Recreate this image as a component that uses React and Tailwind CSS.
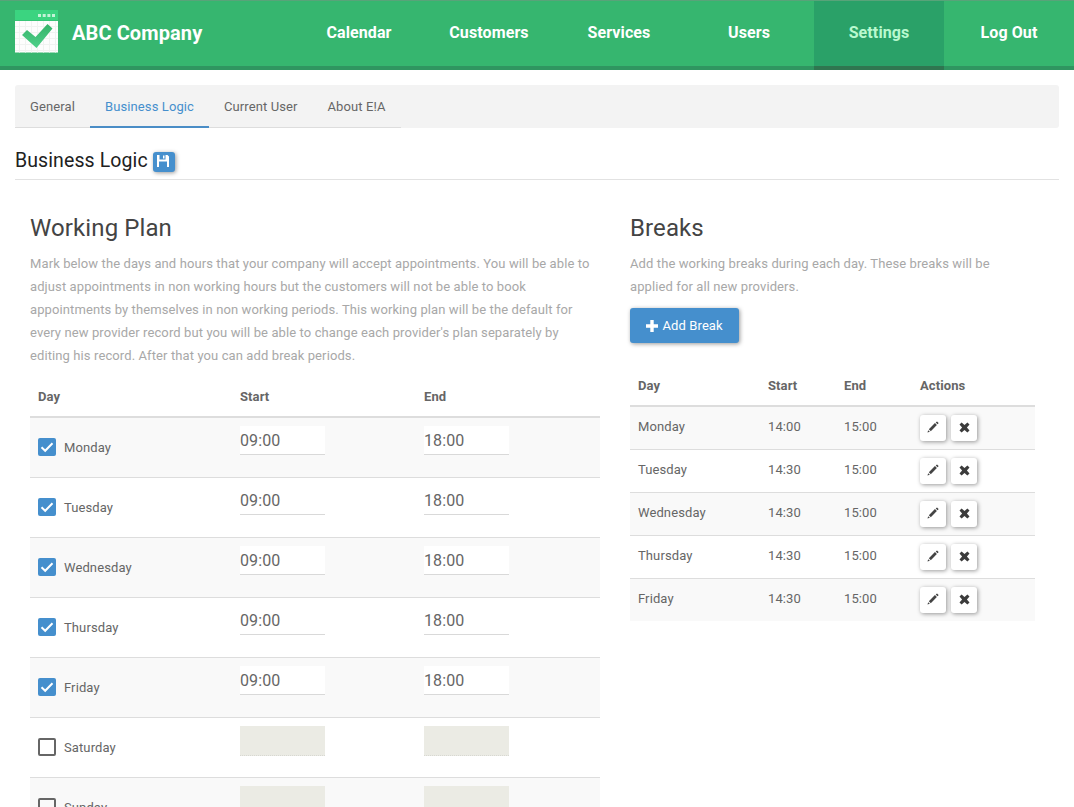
import React from "react";

const navItems = ["Calendar", "Customers", "Services", "Users", "Settings", "Log Out"];

const workingPlan = [
  { day: "Monday", start: "09:00", end: "18:00" },
  { day: "Tuesday", start: "09:00", end: "18:00" },
  { day: "Wednesday", start: "09:00", end: "18:00" },
  { day: "Thursday", start: "09:00", end: "18:00" },
  { day: "Friday", start: "09:00", end: "18:00" },
  { day: "Saturday" },
  { day: "Sunday" },
];

const breaks = [
  { day: "Monday", start: "14:00", end: "15:00" },
  { day: "Tuesday", start: "14:30", end: "15:00" },
  { day: "Wednesday", start: "14:30", end: "15:00" },
  { day: "Thursday", start: "14:30", end: "15:00" },
  { day: "Friday", start: "14:30", end: "15:00" },
];

function Logo() {
  return (
    <svg width="43" height="43" viewBox="0 0 43 43" className="block shrink-0">
      <defs>
        <linearGradient id="tick" x1="0" y1="0" x2="0" y2="1">
          <stop offset="0" stopColor="#35b369" />
          <stop offset="1" stopColor="#4fd08a" />
        </linearGradient>
      </defs>
      <rect width="43" height="10.5" fill="#3bd480" />
      {[23, 27.7, 32.4, 37].map((x) => (
        <rect key={x} x={x} y="4" width="3" height="3" fill="#c4f3d8" />
      ))}
      <rect y="11" width="43" height="31.5" fill="#fdfdfd" />
      <path
        d="M4.500 11v31.500M10.500 11v31.500M16.500 11v31.500M22.500 11v31.500M28.500 11v31.500M34.500 11v31.500M40.500 11v31.500M0 16.500h43M0 22.500h43M0 28.500h43M0 34.500h43M0 40.500h43"
        stroke="#f0f3f1"
        strokeWidth="1"
      />
      <path d="M7 25 12 20 20.500 27 32.500 14 37.500 18.500 21.500 38Z" fill="url(#tick)" />
    </svg>
  );
}

function SaveIcon() {
  return (
    <svg width="12" height="12" viewBox="0 0 12 12" className="block">
      <path d="M0 0H2.500V4.500H8.500V0H10.500L12 1.500V12H10V6.500H2V12H0ZM6 0.500H7.500V3.500H6Z" fill="#fff" />
    </svg>
  );
}

function PlusIcon() {
  return (
    <svg width="12" height="12" viewBox="0 0 12 12" className="block">
      <path d="M4.300 0H7.700V4.300H12V7.700H7.700V12H4.300V7.700H0V4.300H4.300Z" fill="#fff" />
    </svg>
  );
}

function PencilIcon() {
  return (
    <svg width="12" height="12" viewBox="0 0 13 13" className="block">
      <path d="M0.500 12.500 1.300 9.900 3.100 11.700Z" fill="#444" />
      <path d="M2 8.900 8.600 2.300 10.700 4.400 4.100 11Z" fill="#444" />
      <path d="M9.500 1.600 10.400 0.700Q10.800 0.400 11.200 0.700L12.300 1.800Q12.600 2.200 12.300 2.600L11.400 3.500Z" fill="#444" />
    </svg>
  );
}

function RemoveIcon() {
  return (
    <svg width="11" height="11" viewBox="0 0 11 11" className="block">
      <path
        d="M2.600 0.500 5.500 3.100 8.400 0.500 10.500 2.600 7.900 5.500 10.500 8.400 8.400 10.500 5.500 7.900 2.600 10.500 0.500 8.400 3.100 5.500 0.500 2.600Z"
        fill="#3c3c3c"
      />
    </svg>
  );
}

function Checkbox({ checked }) {
  if (!checked) return <span className="block size-[18px] rounded-[2px] border-2 border-[#666]" />;
  return (
    <span className="flex size-[18px] items-center justify-center rounded-[2px] bg-[#458fcd]">
      <svg width="14" height="12" viewBox="0 0 14 12">
        <path d="M1.500 6.300 5.200 9.800 12.500 2.200" fill="none" stroke="#fff" strokeWidth="2" />
      </svg>
    </span>
  );
}

function TimeField({ value }) {
  if (!value) {
    return <div className="h-[30px] w-[85px] border-b border-dotted border-[#d8d8d2] bg-[#ebebe4]" />;
  }
  return (
    <div className="h-[29px] w-[85px] border-b border-[#d9d9d9] bg-white text-base leading-[30px] text-[#666]">
      {value}
    </div>
  );
}

function IconButton({ children }) {
  return (
    <button className="flex h-[26px] w-[26px] items-center justify-center rounded-[3px] bg-white pb-[2px] shadow-[1px_1px_4px_rgba(0,0,0,0.4)]">
      {children}
    </button>
  );
}

export default function App() {
  return (
    <div className="h-[807px] w-full overflow-hidden bg-white font-['Roboto',sans-serif] text-[13px] leading-[23px] tracking-[0.104px] text-[#666]">
      <header className="flex h-[70px] justify-between border-t border-[#58a379] bg-[#36b66f]">
        <div className="flex grow gap-[14px] border-b-4 border-[#2f9560] pt-[9px] pl-[15px]">
          <Logo />
          <div className="pt-[9px] text-xl leading-[28px] font-bold text-white">ABC Company</div>
        </div>
        <nav className="flex">
          {navItems.map((item) => (
            <a
              key={item}
              className={
                item === "Settings"
                  ? "w-[130px] border-b-4 border-[#2f7650] bg-[#2aa168] pt-5 text-center text-base font-bold text-[#b9f9cf]"
                  : "w-[130px] border-b-4 border-[#2f9560] pt-5 text-center text-base font-bold text-white"
              }
            >
              {item}
            </a>
          ))}
        </nav>
      </header>

      <main className="px-[15px] pt-[15px]">
        <div className="flex h-[43px] rounded-[3px] bg-[#f3f3f3]">
          <a className="w-[75px] border-b border-[#ddd] pt-[10px] pl-[15px]">General</a>
          <a className="w-[119px] border-b-2 border-[#4a8dc6] pt-[10px] text-center text-[#458fcd]">Business Logic</a>
          <a className="w-[103px] border-b border-[#ddd] pt-[10px] pl-[15px]">Current User</a>
          <a className="w-[89px] border-b border-[#ddd] pt-[10px] pl-[15.500px]">About E!A</a>
        </div>

        <div className="flex h-[52px] gap-[6px] border-b border-[#e2e2e2] pt-[18px]">
          <h1 className="w-[132px] pt-px text-[19.5px] leading-[28px] whitespace-nowrap text-[#212121]">Business Logic</h1>
          <button className="mt-[6px] flex h-5 w-[22px] justify-center rounded-[3px] bg-[#458fcd] pt-[3px] pr-[2px] shadow-[1px_1px_4px_rgba(0,0,0,0.4)]">
            <SaveIcon />
          </button>
        </div>

        <div className="flex">
          <section className="w-[600px] px-[15px] pt-[34px]">
            <h2 className="text-2xl leading-[28px] text-[#444]">Working Plan</h2>
            <p className="mt-[10px] whitespace-nowrap text-[#a8a8a8]">
              Mark below the days and hours that your company will accept appointments. You will be able to
              <br />
              adjust appointments in non working hours but the customers will not be able to book
              <br />
              appointments by themselves in non working periods. This working plan will be the default for
              <br />
              every new provider record but you will be able to change each provider's plan separately by
              <br />
              editing his record. After that you can add break periods.
            </p>
            <div className="mt-[10px] grid h-[41px] grid-cols-[202px_184px_1fr] border-b-2 border-[#ddd] pt-2 pl-2 font-bold">
              <span>Day</span>
              <span>Start</span>
              <span>End</span>
            </div>
            <div>
              {workingPlan.map(({ day, start, end }) => (
                <div
                  key={day}
                  className="grid h-[60px] grid-cols-[202px_184px_1fr] border-b border-[#ddd] pt-2 pl-2 odd:bg-[#f9f9f9]"
                >
                  <div className="flex h-[42px] items-center gap-2">
                    <Checkbox checked={Boolean(start)} />
                    <span>{day}</span>
                  </div>
                  <TimeField value={start} />
                  <TimeField value={end} />
                </div>
              ))}
            </div>
          </section>

          <section className="w-[435px] px-[15px] pt-[34px]">
            <h2 className="text-2xl leading-[28px] text-[#444]">Breaks</h2>
            <p className="mt-[10px] whitespace-nowrap text-[#a8a8a8]">
              Add the working breaks during each day. These breaks will be
              <br />
              applied for all new providers.
            </p>
            <button className="mt-[10px] flex h-[35px] w-[109px] items-center gap-[4.500px] rounded-[3px] bg-[#458fcd] pl-4 text-white shadow-[1px_1px_4px_rgba(0,0,0,0.4)]">
              <PlusIcon />
              Add Break
            </button>
            <div className="mt-[23px] grid h-[41px] grid-cols-[130px_76px_76px_1fr] border-b-2 border-[#ddd] pt-2 pl-2 font-bold">
              <span>Day</span>
              <span>Start</span>
              <span>End</span>
              <span>Actions</span>
            </div>
            <div>
              {breaks.map(({ day, start, end }) => (
                <div
                  key={day}
                  className="grid h-[43px] grid-cols-[130px_76px_76px_1fr] border-b border-[#ddd] pt-2 pl-2 last:h-[42px] last:border-b-0 odd:bg-[#f9f9f9]"
                >
                  <span>{day}</span>
                  <span>{start}</span>
                  <span>{end}</span>
                  <div className="flex gap-[5px]">
                    <IconButton>
                      <PencilIcon />
                    </IconButton>
                    <IconButton>
                      <RemoveIcon />
                    </IconButton>
                  </div>
                </div>
              ))}
            </div>
          </section>
        </div>
      </main>
    </div>
  );
}
